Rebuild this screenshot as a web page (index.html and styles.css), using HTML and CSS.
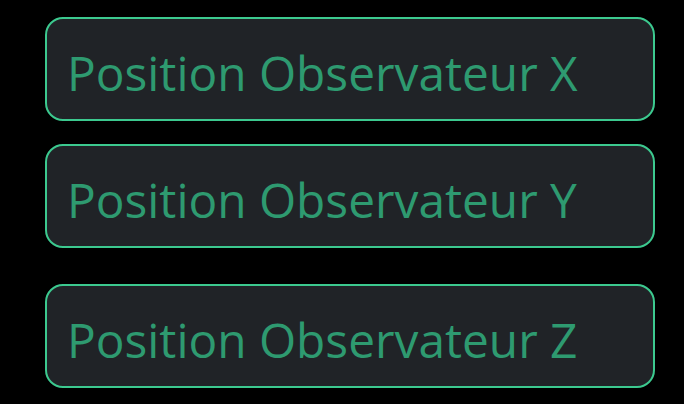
FILE: index.html
```html
<!DOCTYPE html>
<html>
<head>
<meta charset="utf-8">
<link rel="stylesheet" href="styles.css">
</head>
<body>
<div class="form">
  <div class="field first"><span class="label">Position Observateur X</span></div>
  <div class="field second"><span class="label">Position Observateur Y</span></div>
  <div class="field third"><span class="label">Position Observateur Z</span></div>
</div>
</body>
</html>
```
FILE: styles.css
```css
html, body {
  margin: 0;
  padding: 0;
  background: #000;
  width: 684px;
  height: 404px;
  overflow: hidden;
}
.form {
  display: flex;
  flex-direction: column;
  padding: 17px 0 0 45px;
}
.field {
  box-sizing: border-box;
  width: 610px;
  height: 104px;
  border: 2.5px solid #3cc98f;
  border-radius: 18px;
  background: #202327;
  display: flex;
  align-items: center;
  padding: 6px 0 0 20px;
}
.second { margin-top: 23px; }
.third { margin-top: 36px; }
.label {
  font-family: "Open Sans", "Noto Sans", sans-serif;
  font-weight: 400;
  font-size: 47.8px;
  color: #2e9a70;
  white-space: nowrap;
}
```
